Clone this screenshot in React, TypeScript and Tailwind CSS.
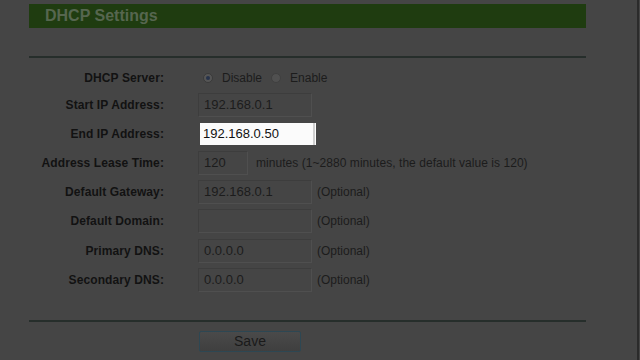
const rows = [
  { label: 'Start IP Address:', value: '192.168.0.1' },
];

const Field = ({ value, w = 'w-[114px]' }: { value: string; w?: string }) => (
  <div
    className={`${w} h-[24px] flex items-center pl-[5px] border border-t-[#3d3d3d] border-l-[#3d3d3d] border-r-[#4f4f4f] border-b-[#4f4f4f] text-[13px] text-[#1c1c1c]`}
  >
    {value}
  </div>
);

const Row = ({ label, children, h = 'h-[29px]' }: { label: string; children: React.ReactNode; h?: string }) => (
  <div className={`flex items-center ${h}`}>
    <div className="w-[135px] text-right font-bold text-[12px] text-[#121212] tracking-[0.1px]">{label}</div>
    <div className="ml-[34px] flex items-center">{children}</div>
  </div>
);

const Optional = () => <span className="ml-[5px] text-[12px] text-[#1c1c1c]">(Optional)</span>;

export default function App() {
  return (
    <div className="w-[640px] h-[360px] bg-[#454545] flex overflow-hidden" style={{ fontFamily: '"Liberation Sans", Arial, sans-serif' }}>
      <div className="w-[637px] pl-[29px]">
        <div className="w-[557px]">
          {/* header */}
          <div className="mt-[4px] h-[24px] bg-[#1f3c10] flex items-center pl-[16px]">
            <span className="text-[16px] font-bold text-[#56664f]">DHCP Settings</span>
          </div>
          <div className="mt-[28px] h-[2px] bg-[#262e2b]" />

          <div className="mt-[7px]">
            <Row label="DHCP Server:" h="h-[26px]">
              <div className="flex items-center text-[12px] text-[#1c1c1c]">
                <span className="w-[10px] h-[10px] rounded-full bg-[#555] border border-[#3a3a3a] flex items-center justify-center ml-[5px]">
                  <span className="w-[4px] h-[4px] rounded-full bg-[#26324a]" />
                </span>
                <span className="ml-[9px]">Disable</span>
                <span className="w-[10px] h-[10px] rounded-full bg-[#505050] border border-[#404040] ml-[9px]" />
                <span className="ml-[9px]">Enable</span>
              </div>
            </Row>
            {rows.map((r) => (
              <Row key={r.label} label={r.label} h="h-[28px]">
                <Field value={r.value} />
              </Row>
            ))}
            <Row label="End IP Address:">
              <div className="ml-[2px] w-[116px] h-[22px] bg-[#fbfbfb] flex items-center relative">
                <span className="pl-[3px] text-[13px] text-[#111]">192.168.0.50</span>
                <span className="absolute right-[1px] top-0 bottom-0 w-[2px] bg-[#cfcfcf]" />
              </div>
            </Row>
            <Row label="Address Lease Time:">
              <Field value="120" w="w-[50px]" />
              <span className="ml-[8px] text-[12px] text-[#1c1c1c] tracking-[0.05px]">minutes (1~2880 minutes, the default value is 120)</span>
            </Row>
            <Row label="Default Gateway:">
              <Field value="192.168.0.1" />
              <Optional />
            </Row>
            <Row label="Default Domain:">
              <Field value="" />
              <Optional />
            </Row>
            <div className="mt-[1px]">
              <Row label="Primary DNS:">
                <Field value="0.0.0.0" />
                <Optional />
              </Row>
              <Row label="Secondary DNS:">
                <Field value="0.0.0.0" />
                <Optional />
              </Row>
            </div>
          </div>

          <div className="mt-[26px] h-[2px] bg-[#262e2b]" />
          <div className="mt-[9px] ml-[170px] w-[102px] h-[21px] rounded-[2px] border border-[#2d4753] bg-gradient-to-b from-[#4a4a4a] to-[#3f3f3f] flex items-center justify-center text-[14px] text-[#1a1a1a]">
            Save
          </div>
        </div>
      </div>
      <div className="w-[2px] h-full bg-[#2b2b2b]" />
      <div className="flex-1" />
    </div>
  );
}
